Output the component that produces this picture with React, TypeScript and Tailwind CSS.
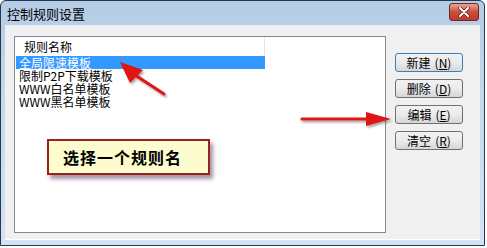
import React from "react";

const font = { fontFamily: '"Noto Sans CJK SC", "Noto Sans", sans-serif' };

function Btn({ label, k, primary }: { label: string; k: string; primary?: boolean }) {
  return (
    <div
      className={`h-[19px] w-[68px] rounded-[3px] border ${primary ? "border-[#3c7fb1]" : "border-[#707070]"} bg-gradient-to-b from-[#f2f2f2] via-[#ebebeb] to-[#d6d6d6] flex items-center justify-center text-[12px] leading-none text-black`}
    >
      <span>{label}</span>
      <span className="ml-[4px]">(<span className="underline">{k}</span>)</span>
    </div>
  );
}

export default function App() {
  return (
    <div className="w-[487px] h-[248px] bg-white relative" style={font}>
      <div className="w-[485px] h-[246px] border border-[#26384a] rounded-t-[6px] bg-gradient-to-b from-[#b4cce6] via-[#c9daee] to-[#d4e2f1] flex flex-col overflow-hidden">
        {/* title bar */}
        <div className="h-[24px] flex items-center justify-between pl-[6px] pr-[5px] shrink-0">
          <span className="text-[13px] text-black leading-none">控制规则设置</span>
          <div className="w-[30px] h-[18px] mt-[-2px] rounded-[3px] border border-[#6b2a22] bg-gradient-to-b from-[#e8a493] via-[#c9503a] to-[#c0392b] flex items-center justify-center">
            <svg width="12" height="10" viewBox="0 0 12 10">
              <path d="M2 1 L10 9 M10 1 L2 9" stroke="#5a1a10" strokeWidth="3.4" strokeLinecap="round" />
              <path d="M2 1 L10 9 M10 1 L2 9" stroke="#ffffff" strokeWidth="2" strokeLinecap="round" />
            </svg>
          </div>
        </div>
        {/* client */}
        <div className="flex-1 mx-[4px] mb-[5px] bg-[#f0f0f0] border-b border-[#ffffff] flex pl-[9px] pt-[11px] pb-[6px]">
          <div className="w-[372px] h-[197px] border border-[#828790] bg-white flex flex-col">
            <div className="h-[19px] flex shrink-0">
              <div className="w-[250px] border-r border-[#e5e5e5] pl-[9px] pt-[3px] text-[12px] leading-[13px] text-black">规则名称</div>
            </div>
            <div className="flex flex-col pl-[1px] text-[12px] leading-[13px] text-black">
              <div className="w-[249px] h-[13px] bg-[#3399ff] text-white pl-[3px]">全局限速模板</div>
              <div className="h-[13px] pl-[3px]">限制P2P下载模板</div>
              <div className="h-[13px] pl-[3px]">WWW白名单模板</div>
              <div className="h-[13px] pl-[3px]">WWW黑名单模板</div>
            </div>
          </div>
          <div className="ml-[9px] pt-[17px] flex flex-col gap-[7px]">
            <Btn label="新建" k="N" primary />
            <Btn label="删除" k="D" />
            <Btn label="编辑" k="E" />
            <Btn label="清空" k="R" />
          </div>
        </div>
      </div>

      {/* callout */}
      <div className="absolute left-[47px] top-[139px] w-[163px] h-[36px] bg-[#fdfcce] border-2 border-[#9b2020] shadow-[3px_4px_4px_rgba(90,60,90,0.55)] flex items-center pl-[14px]">
        <span className="text-[16px] font-bold text-black tracking-[1px]">选择一个规则名</span>
      </div>

      {/* arrows */}
      <svg className="absolute left-0 top-0 pointer-events-none" width="487" height="248">
        <defs>
          <filter id="sh" x="-20%" y="-20%" width="140%" height="140%">
            <feDropShadow dx="1.5" dy="2" stdDeviation="1.2" floodColor="#000" floodOpacity="0.35" />
          </filter>
        </defs>
        <g filter="url(#sh)" fill="#e01212" stroke="#e01212">
          <line x1="164" y1="94" x2="132" y2="73" strokeWidth="3" strokeLinecap="round" />
          <polygon points="120,62 143,70 130,83" stroke="none" />
          <line x1="302" y1="119" x2="370" y2="119" strokeWidth="3.2" strokeLinecap="round" />
          <polygon points="391,119 366,112 366,126" stroke="none" />
        </g>
      </svg>
    </div>
  );
}
